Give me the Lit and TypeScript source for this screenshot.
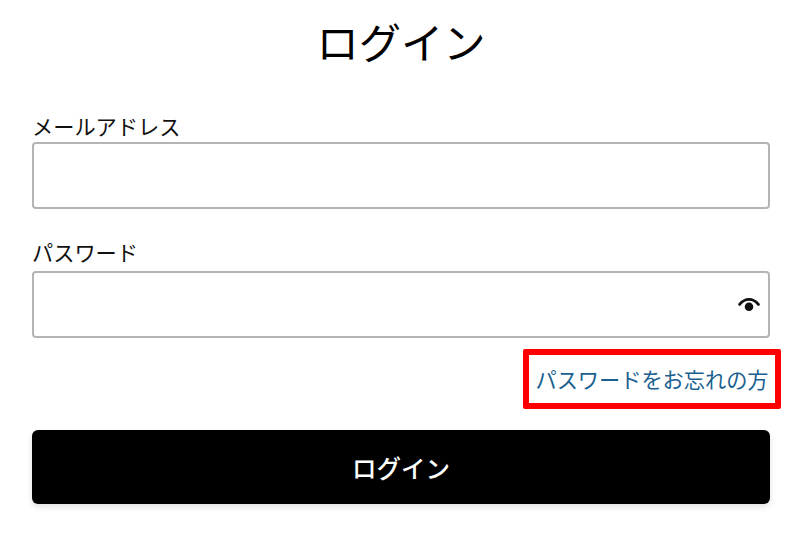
import { LitElement, html, css } from "lit";
import { customElement } from "lit/decorators.js";

@customElement("app-root")
export class AppRoot extends LitElement {
  static styles = css`
    :host {
      display: block;
      width: 800px;
      height: 540px;
      background: #fff;
      overflow: hidden;
      font-family: "Noto Sans CJK JP", "Noto Sans", sans-serif;
      color: #000;
    }
    .page {
      display: flex;
      flex-direction: column;
      padding: 12px 30px 0 32px;
      box-sizing: border-box;
    }
    h1 {
      margin: 0;
      height: 60px;
      line-height: 58px;
      font-size: 42.3px;
      font-weight: 400;
      text-align: center;
    }
    .label {
      font-size: 21.2px;
      line-height: 26px;
      color: #111;
    }
    .first {
      margin-top: 41px;
      height: 29px;
    }
    .second {
      margin-top: 30px;
      height: 32px;
    }
    .field {
      width: 738px;
      height: 67px;
      box-sizing: border-box;
      border: 2px solid #b4b4b4;
      border-radius: 4px;
      background: #fff;
      display: flex;
      align-items: center;
      justify-content: flex-end;
      padding: 0 8px 0 0;
    }
    .field svg {
      width: 22px;
      height: 18px;
      display: block;
    }
    .linkrow {
      display: flex;
      justify-content: flex-end;
      margin-top: 11px;
      width: 749px;
    }
    .link {
      box-sizing: border-box;
      width: 258px;
      height: 60px;
      border: 6px solid #f00;
      border-radius: 2px;
      display: flex;
      align-items: center;
      justify-content: center;
      font-size: 21.2px;
      color: #1a5f8f;
      text-decoration: none;
      white-space: nowrap;
      padding-bottom: 2px;
    }
    .submit {
      margin-top: 21px;
      width: 738px;
      height: 74px;
      border: none;
      border-radius: 6px;
      background: #000;
      color: #fff;
      font-family: inherit;
      font-size: 24.5px;
      font-weight: 500;
      box-shadow: 0 3px 6px rgba(0, 0, 0, 0.12);
      padding: 0;
    }
  `;

  render() {
    return html`
      <div class="page">
        <h1>ログイン</h1>
        <div class="label first">メールアドレス</div>
        <div class="field"></div>
        <div class="label second">パスワード</div>
        <div class="field">
          <svg viewBox="0 0 22 18" aria-hidden="true">
            <path d="M1.6 8.4C4.4 5 7.6 3.4 11 3.4s6.6 1.6 9.4 5" fill="none" stroke="#111" stroke-width="2.8" stroke-linecap="round" />
            <circle cx="11" cy="10.8" r="4.3" fill="#111" />
          </svg>
        </div>
        <div class="linkrow"><a class="link" href="#">パスワードをお忘れの方</a></div>
        <button class="submit">ログイン</button>
      </div>
    `;
  }
}
